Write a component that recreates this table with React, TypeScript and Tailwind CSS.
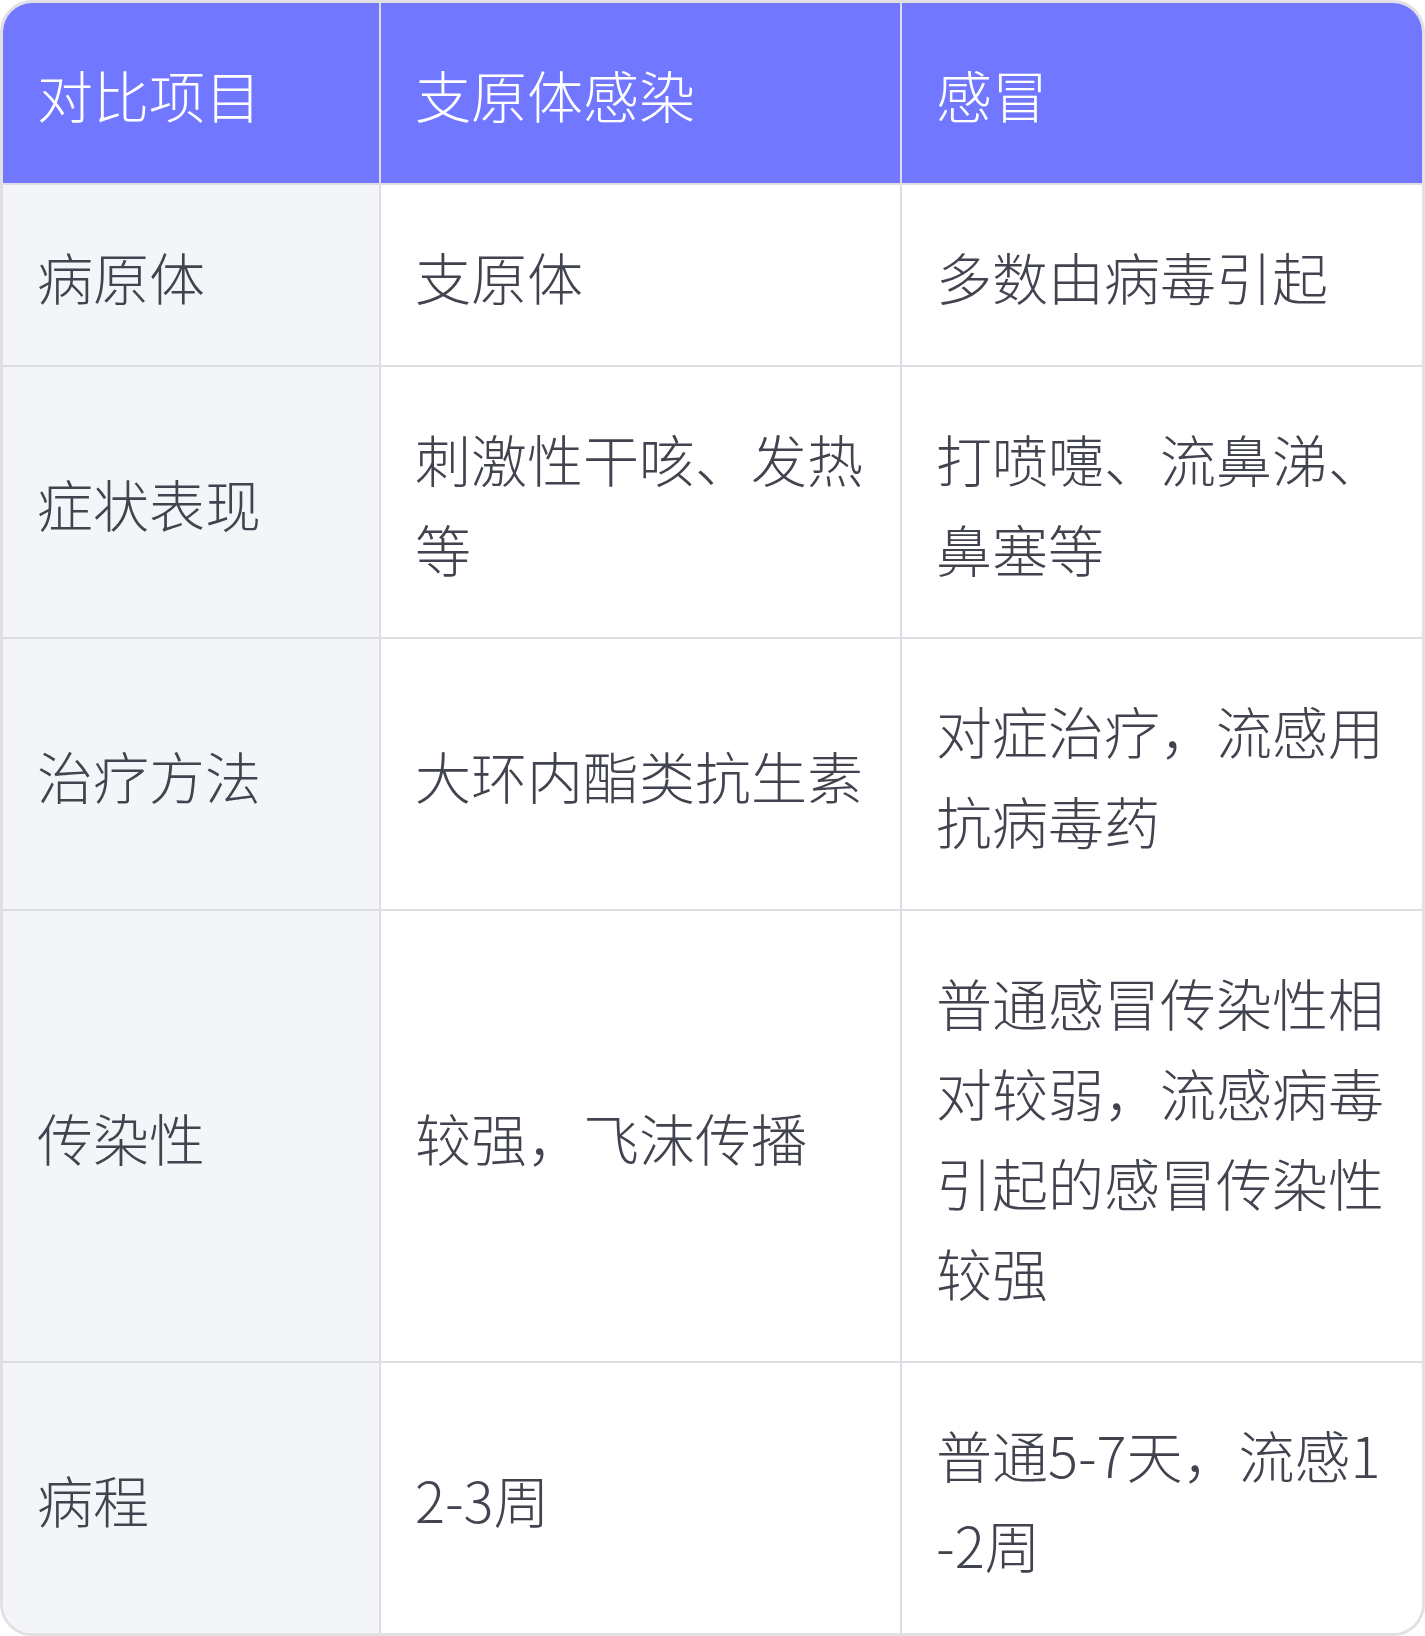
import React from 'react';

type Row = { item: string; mycoplasma: string; cold: string };

const rows: Row[] = [
  { item: '病原体', mycoplasma: '支原体', cold: '多数由病毒引起' },
  { item: '症状表现', mycoplasma: '刺激性干咳、发热等', cold: '打喷嚏、流鼻涕、鼻塞等' },
  { item: '治疗方法', mycoplasma: '大环内酯类抗生素', cold: '对症治疗，流感用抗病毒药' },
  { item: '传染性', mycoplasma: '较强，飞沫传播', cold: '普通感冒传染性相对较弱，流感病毒引起的感冒传染性较强' },
  { item: '病程', mycoplasma: '2-3周', cold: '普通5-7天，流感1-2周' },
];

const cell = 'flex items-center px-[34px] pt-[46px] pb-[44px] border-[#dddee3] break-all';

const App: React.FC = () => {
  return (
    <div
      className="w-[1425px] min-h-[1636px] bg-white"
      style={{ fontFamily: '"Noto Sans CJK SC", "Noto Sans", sans-serif' }}
    >
      <div className="overflow-hidden rounded-[32px] border-[3px] border-[#e1e1e5] text-[56px] leading-[90px] font-light">
        <div className="grid grid-cols-[378px_521px_1fr]">
          <div className={`${cell} bg-[#7177ff] text-white border-r-2 border-b-2`}>对比项目</div>
          <div className={`${cell} bg-[#7177ff] text-white border-r-2 border-b-2`}>支原体感染</div>
          <div className={`${cell} bg-[#7177ff] text-white border-b-2`}>感冒</div>

          {rows.map((row, i) => {
            const last = i === rows.length - 1;
            return (
              <React.Fragment key={row.item}>
                <div className={`${cell} bg-[#f4f5f9] text-[#41434f] border-r-2 ${last ? '' : 'border-b-2'}`}>
                  {row.item}
                </div>
                <div className={`${cell} bg-white text-[#41434f] border-r-2 ${last ? '' : 'border-b-2'}`}>
                  {row.mycoplasma}
                </div>
                <div className={`${cell} bg-white text-[#41434f] ${last ? '' : 'border-b-2'}`}>
                  {row.cold}
                </div>
              </React.Fragment>
            );
          })}
        </div>
      </div>
    </div>
  );
};

export default App;
